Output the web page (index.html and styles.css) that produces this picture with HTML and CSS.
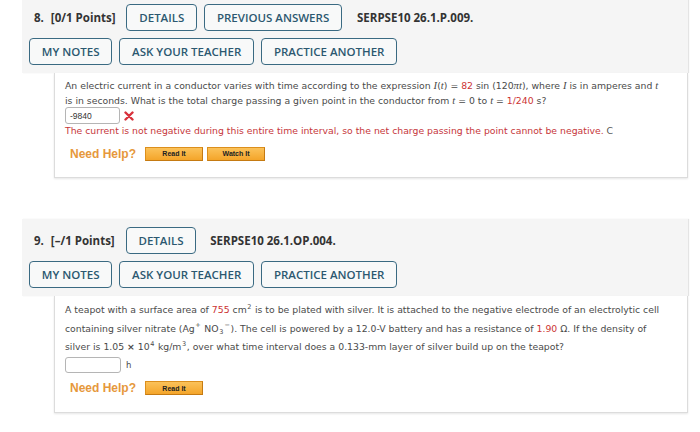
FILE: index.html
```html
<!DOCTYPE html>
<html>
<head>
<meta charset="utf-8">
<link rel="stylesheet" href="styles.css">
</head>
<body>
<div class="q q1">
  <div class="qhead">
    <div class="row">
      <span class="label"><span class="num">8.</span>[0/1 Points]</span>
      <span class="btn">DETAILS</span>
      <span class="btn">PREVIOUS ANSWERS</span>
      <span class="code">SERPSE10 26.1.P.009.</span>
    </div>
    <div class="row row2">
      <span class="btn">MY NOTES</span>
      <span class="btn">ASK YOUR TEACHER</span>
      <span class="btn">PRACTICE ANOTHER</span>
    </div>
  </div>
  <div class="qbody b1">
    <p class="text">An electric current in a conductor varies with time according to the expression <i class="v">I</i>(<i class="v">t</i>) = <span class="red">82</span> sin (120<i class="v">πt</i>), where <i class="v">I</i> is in amperes and <i class="v">t</i> is in seconds. What is the total charge passing a given point in the conductor from <i class="v">t</i> = 0 to <i class="v">t</i> = <span class="red">1/240</span> s?</p>
    <div class="answer">
      <span class="input">-9840</span>
      <svg class="xmark" width="10" height="10" viewBox="0 0 10 10"><path d="M1.5 1.5 L8.5 8.5 M8.5 1.5 L1.5 8.5" stroke="#d8323c" stroke-width="2.4" stroke-linecap="round"/></svg>
    </div>
    <p class="error">The current is not negative during this entire time interval, so the net charge passing the point cannot be negative. <span class="gray">C</span></p>
    <div class="help">
      <span class="need">Need Help?</span>
      <span class="hb">Read It</span>
      <span class="hb">Watch It</span>
    </div>
  </div>
</div>

<div class="q q2">
  <div class="qhead">
    <div class="row">
      <span class="label label2"><span class="num">9.</span>[–/1 Points]</span>
      <span class="btn">DETAILS</span>
      <span class="code code2">SERPSE10 26.1.OP.004.</span>
    </div>
    <div class="row row2">
      <span class="btn">MY NOTES</span>
      <span class="btn">ASK YOUR TEACHER</span>
      <span class="btn">PRACTICE ANOTHER</span>
    </div>
  </div>
  <div class="qbody b2">
    <p class="text text2">A teapot with a surface area of <span class="red">755</span> cm<sup>2</sup> is to be plated with silver. It is attached to the negative electrode of an electrolytic cell containing silver nitrate (Ag<sup>+</sup> NO<sub>3</sub><sup>−</sup>). The cell is powered by a 12.0-V battery and has a resistance of <span class="red">1.90</span> Ω. If the density of silver is 1.05 <b>×</b> 10<sup>4</sup> kg/m<sup>3</sup>, over what time interval does a 0.133-mm layer of silver build up on the teapot?</p>
    <div class="answer answer2">
      <span class="input empty"></span>
      <span class="unit">h</span>
    </div>
    <div class="help help2">
      <span class="need">Need Help?</span>
      <span class="hb">Read It</span>
    </div>
  </div>
</div>
</body>
</html>
```

FILE: styles.css
```css
html, body {
  margin: 0;
  padding: 0;
  background: #ffffff;
}
body {
  width: 700px;
  height: 432px;
  overflow: hidden;
  font-family: "Open Sans", "DejaVu Sans", sans-serif;
}
.q {
  margin-left: 22px;
  width: 666px;
}
.q1 {
  margin-top: -4px;
}
.q2 {
  margin-top: 41px;
}
.qhead {
  background: #f5f5f5;
  padding: 8px 0 8px 7px;
  box-shadow: 1px 0 1px #e4e4e4;
}
.row {
  display: flex;
  align-items: center;
  gap: 7px;
  height: 27px;
}
.row2 {
  margin-top: 7px;
}
.label {
  font-weight: 700;
  font-size: 11.5px;
  color: #333;
  margin-left: 5px;
  margin-right: 4px;
  white-space: nowrap;
}
.label2 {
  margin-right: 4px;
}
.num {
  margin-right: 7px;
}
.btn {
  box-sizing: border-box;
  height: 27px;
  display: flex;
  align-items: center;
  padding: 0 11.8px;
  border: 1.6px solid #3a6a82;
  border-radius: 4px;
  font-size: 11.5px;
  font-weight: 600;
  color: #2c5870;
  background: #f8f9f9;
  white-space: nowrap;
}
.code {
  font-size: 11.5px;
  font-weight: 700;
  color: #333;
  margin-left: 8px;
  white-space: nowrap;
}
.code2 {
  margin-left: 7px;
}
.qbody {
  margin-left: 32px;
  background: #fff;
  border: 1px solid #dcdcdc;
  border-top: none;
  box-shadow: 0 1px 2px #e6e6e6;
  padding-left: 10px;
  color: #4a4a4a;
  font-family: "DejaVu Sans", Verdana, sans-serif;
  font-size: 9.3px;
}
.b1 {
  height: 105px;
  box-sizing: border-box;
  padding-top: 5px;
}
.b2 {
  height: 117px;
  box-sizing: border-box;
  padding-top: 5px;
}
.text {
  margin: 0;
  line-height: 14px;
  width: 600px;
}
.text2 {
  line-height: 18.5px;
  width: 600px;
}
.red {
  color: #cc3333;
}
.v {
  font-family: "Liberation Serif", "DejaVu Serif", serif;
  font-style: italic;
  font-size: 10.7px;
}
sup, sub {
  font-size: 6.5px;
  line-height: 0;
  margin: 0 0.6px;
}
.answer {
  display: flex;
  align-items: center;
  height: 17px;
  margin-top: -1px;
}
.input {
  box-sizing: border-box;
  width: 55px;
  height: 17px;
  border: 1px solid #b5b5b5;
  border-radius: 3px;
  font-family: "Liberation Sans", Arial, sans-serif;
  font-size: 8.5px;
  color: #333;
  padding-left: 4px;
  display: flex;
  align-items: center;
}
.xmark {
  margin-left: 4px;
}
.error {
  margin: 0;
  color: #c6363b;
  line-height: 14px;
}
.gray {
  color: #555;
}
.help {
  display: flex;
  align-items: center;
  margin-top: 8px;
  margin-left: 5px;
  height: 15px;
}
.need {
  font-family: "Liberation Sans", Arial, sans-serif;
  font-weight: 700;
  font-size: 12px;
  color: #e6983c;
  margin-right: 9px;
}
.hb {
  box-sizing: border-box;
  width: 58px;
  height: 14px;
  margin-right: 4px;
  display: flex;
  align-items: center;
  justify-content: center;
  font-family: "Liberation Sans", Arial, sans-serif;
  font-weight: 700;
  font-size: 7px;
  color: #222;
  background: linear-gradient(#fbc25a, #f4a52a);
  border: 1px solid #dc8f1c;
  border-right-color: #c57a12;
  border-bottom-color: #c57a12;
}
.answer2 {
  margin-top: 0;
  height: 16px;
}
.empty {
  height: 16px;
  width: 56px;
}
.unit {
  margin-left: 5px;
  font-size: 8.5px;
}
.help2 {
  margin-top: 8px;
}
```
